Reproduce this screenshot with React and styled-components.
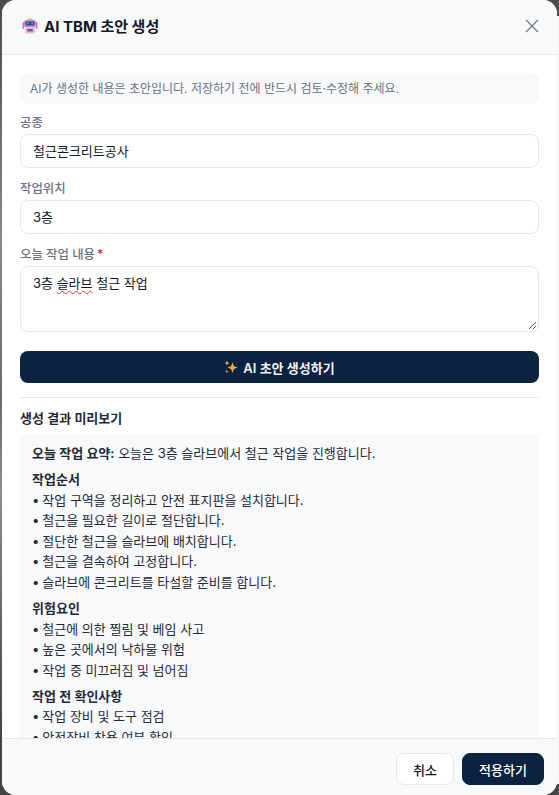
import React from "react";
import styled, { createGlobalStyle } from "styled-components";

const Global = createGlobalStyle`
  html, body { margin: 0; padding: 0; height: 100%; overflow: hidden; }
  body { background: #6f6f6f; font-family: Inter, "Noto Sans CJK KR", sans-serif; }
  * { box-sizing: border-box; }
`;
const Backdrop = styled.div`
  width: 559px; height: 795px; padding: 0 2px;
  background:
    linear-gradient(#4d4d4d 0 16px, #f3f4f6 16px 784px, #4d4d4d 784px) right top / 2px 100% no-repeat,
    linear-gradient(#4a4a4a, #8a8a8a 30%, #6a6a6a 50%, #8e8e8e 62%, #444 92%) left top / 100% 100% no-repeat;
`;
const Modal = styled.div`
  width: 555px; height: 795px; background: #fff; border-radius: 14px;
  display: flex; flex-direction: column; overflow: hidden;
`;
const Header = styled.header`
  flex: 0 0 55px; display: flex; align-items: center; justify-content: space-between;
  padding: 0 16px 3px 20px; background: #f8f9fb; border-bottom: 1px solid #e5e7eb;
`;
const Title = styled.h2`
  margin: 0; font-size: 15px; font-weight: 700; color: #111827; display: flex; align-items: center; gap: 6px;
`;
const Close = styled.button`
  border: 0; background: none; padding: 0; width: 18px; height: 18px; color: #6b7280; display: flex;
`;
const Body = styled.div`
  flex: 1; min-height: 0; overflow: hidden; padding: 18px 18px 0 18px;
  display: flex; flex-direction: column; align-items: stretch;
`;
const Notice = styled.div`
  height: 31px; flex: none; border-radius: 8px; background: #f8f9fb; color: #6b7280;
  font-size: 12px; line-height: 31px; padding: 0 10px; margin-bottom: 11px; white-space: nowrap;
`;
const Label = styled.label`
  display: block; font-size: 12.4px; line-height: 16px; color: #6b7280; font-weight: 500; margin-bottom: 3px;
  i { color: #dc2626; font-style: normal; margin-left: 2px; }
`;
const Field = styled.div`
  height: 34px; flex: none; border: 1px solid #e5e7eb; border-radius: 8px; font-size: 13px;
  color: #111827; padding: 0 12px 1px; display: flex; align-items: center; margin-bottom: 13px; background: #fff;
`;
const Area = styled.div`
  position: relative; height: 66px; flex: none; border: 1px solid #e5e7eb; border-radius: 8px;
  font-size: 13px; line-height: 18px; color: #111827; padding: 7px 12px; margin-bottom: 19px;
  u { text-decoration: underline wavy #ef2b2b 1.2px; text-underline-offset: 2px; }
  svg { position: absolute; right: 1px; bottom: 1px; }
`;
const Generate = styled.button`
  height: 32px; flex: none; border: 0; border-radius: 8px; background: #0b2240; color: #f3f4f6;
  font: 600 13px Inter, "Noto Sans CJK KR", sans-serif; padding: 0; display: flex;
  align-items: center; justify-content: center; gap: 5px; margin-bottom: 14px;
`;
const Divider = styled.hr`
  border: 0; border-top: 1px solid #e5e7eb; width: 100%; margin: 0 0 12px; flex: none;
`;
const PreviewTitle = styled.h3`
  margin: 0 0 8px; font-size: 13px; line-height: 16px; font-weight: 600; color: #1f2937; flex: none;
`;
const Preview = styled.div`
  flex: none; background: #f8f9fb; border-radius: 8px 8px 0 0; padding: 9px 12px; font-size: 13px;
  color: #1f2937; line-height: 20.6px;
`;
const Summary = styled.p`
  margin: 0 0 5.4px; b { font-weight: 600; }
`;
const GroupTitle = styled.div`
  font-weight: 600; margin-top: 5.4px; line-height: 20.6px;
`;
const Line = styled.div`
  &::before { content: "•"; margin-right: 3px; }
`;
const Footer = styled.footer`
  flex: 0 0 57px; display: flex; justify-content: flex-end; align-items: flex-start; gap: 8px;
  padding: 14px 13px 0 0; background: #f8f9fb; border-top: 1px solid #e5e7eb;
`;
const Btn = styled.button`
  height: 32px; width: ${p => p.$w}px; border-radius: 8px; font: 500 13px Inter, "Noto Sans CJK KR", sans-serif;
  border: 1px solid ${p => (p.$primary ? "#0b2240" : "#e5e7eb")};
  background: ${p => (p.$primary ? "#0b2240" : "#fff")};
  color: ${p => (p.$primary ? "#fff" : "#111827")};
`;

const Robot = () => (
  <svg width="16" height="16" viewBox="0 0 16 16">
    <rect x="5.5" y="0.5" width="5" height="2" rx="0.8" fill="#f4b63f" />
    <rect x="0.6" y="4" width="1.6" height="7" rx="0.8" fill="#e8649a" />
    <rect x="13.8" y="4" width="1.6" height="7" rx="0.8" fill="#e8649a" />
    <rect x="2" y="2" width="12" height="7.5" rx="2" fill="#c98bd8" />
    <rect x="3.5" y="3.5" width="9" height="4" rx="1.4" fill="#1d4f8c" />
    <rect x="5" y="4.6" width="1.6" height="1.6" fill="#4fc3f7" />
    <rect x="9.4" y="4.6" width="1.6" height="1.6" fill="#4fc3f7" />
    <rect x="3" y="9.5" width="10" height="6" rx="2" fill="#e2b6e6" />
    <rect x="5.2" y="11" width="5.6" height="2.4" rx="0.6" fill="#6a5a8c" />
  </svg>
);

const Sparkles = () => (
  <svg width="14" height="14" viewBox="0 0 14 14">
    <path d="M8.5 2.5 L10 6.2 L13.6 7.6 L10 9 L8.5 12.8 L7 9 L3.4 7.6 L7 6.2 Z" fill="#f6a93b" />
    <path d="M3 0.6 L3.7 2.4 L5.4 3 L3.7 3.7 L3 5.4 L2.3 3.7 L0.6 3 L2.3 2.4 Z" fill="#f9c667" />
    <path d="M2.8 9.4 L3.4 10.9 L4.9 11.5 L3.4 12.1 L2.8 13.6 L2.2 12.1 L0.7 11.5 L2.2 10.9 Z" fill="#f08a3c" />
  </svg>
);

const groups = [
  ["작업순서", ["작업 구역을 정리하고 안전 표지판을 설치합니다.", "철근을 필요한 길이로 절단합니다.", "절단한 철근을 슬라브에 배치합니다.", "철근을 결속하여 고정합니다.", "슬라브에 콘크리트를 타설할 준비를 합니다."]],
  ["위험요인", ["철근에 의한 찔림 및 베임 사고", "높은 곳에서의 낙하물 위험", "작업 중 미끄러짐 및 넘어짐"]],
  ["작업 전 확인사항", ["작업 장비 및 도구 점검", "안전장비 착용 여부 확인"]],
];

export default function App() {
  return (
    <Backdrop>
      <Global />
      <Modal>
        <Header>
          <Title><Robot />AI TBM 초안 생성</Title>
          <Close aria-label="닫기">
            <svg width="18" height="18" viewBox="0 0 18 18" fill="none" stroke="currentColor" strokeWidth="1.1"><path d="M3 3l12 12M15 3L3 15" /></svg>
          </Close>
        </Header>
        <Body>
          <Notice>AI가 생성한 내용은 초안입니다. 저장하기 전에 반드시 검토·수정해 주세요.</Notice>
          <Label>공종</Label>
          <Field>철근콘크리트공사</Field>
          <Label>작업위치</Label>
          <Field>3층</Field>
          <Label>오늘 작업 내용<i>*</i></Label>
          <Area>
            3층 <u>슬라브</u> 철근 작업
            <svg width="9" height="9" viewBox="0 0 9 9" stroke="#555" strokeWidth="1"><path d="M1 8L8 1M5 8l3-3" /></svg>
          </Area>
          <Generate><Sparkles />AI 초안 생성하기</Generate>
          <Divider />
          <PreviewTitle>생성 결과 미리보기</PreviewTitle>
          <Preview>
            <Summary><b>오늘 작업 요약:</b> 오늘은 3층 슬라브에서 철근 작업을 진행합니다.</Summary>
            {groups.map(([t, items]) => (
              <div key={t}>
                <GroupTitle>{t}</GroupTitle>
                {items.map(x => <Line key={x}>{x}</Line>)}
              </div>
            ))}
          </Preview>
        </Body>
        <Footer>
          <Btn $w={58}>취소</Btn>
          <Btn $w={82} $primary>적용하기</Btn>
        </Footer>
      </Modal>
    </Backdrop>
  );
}
